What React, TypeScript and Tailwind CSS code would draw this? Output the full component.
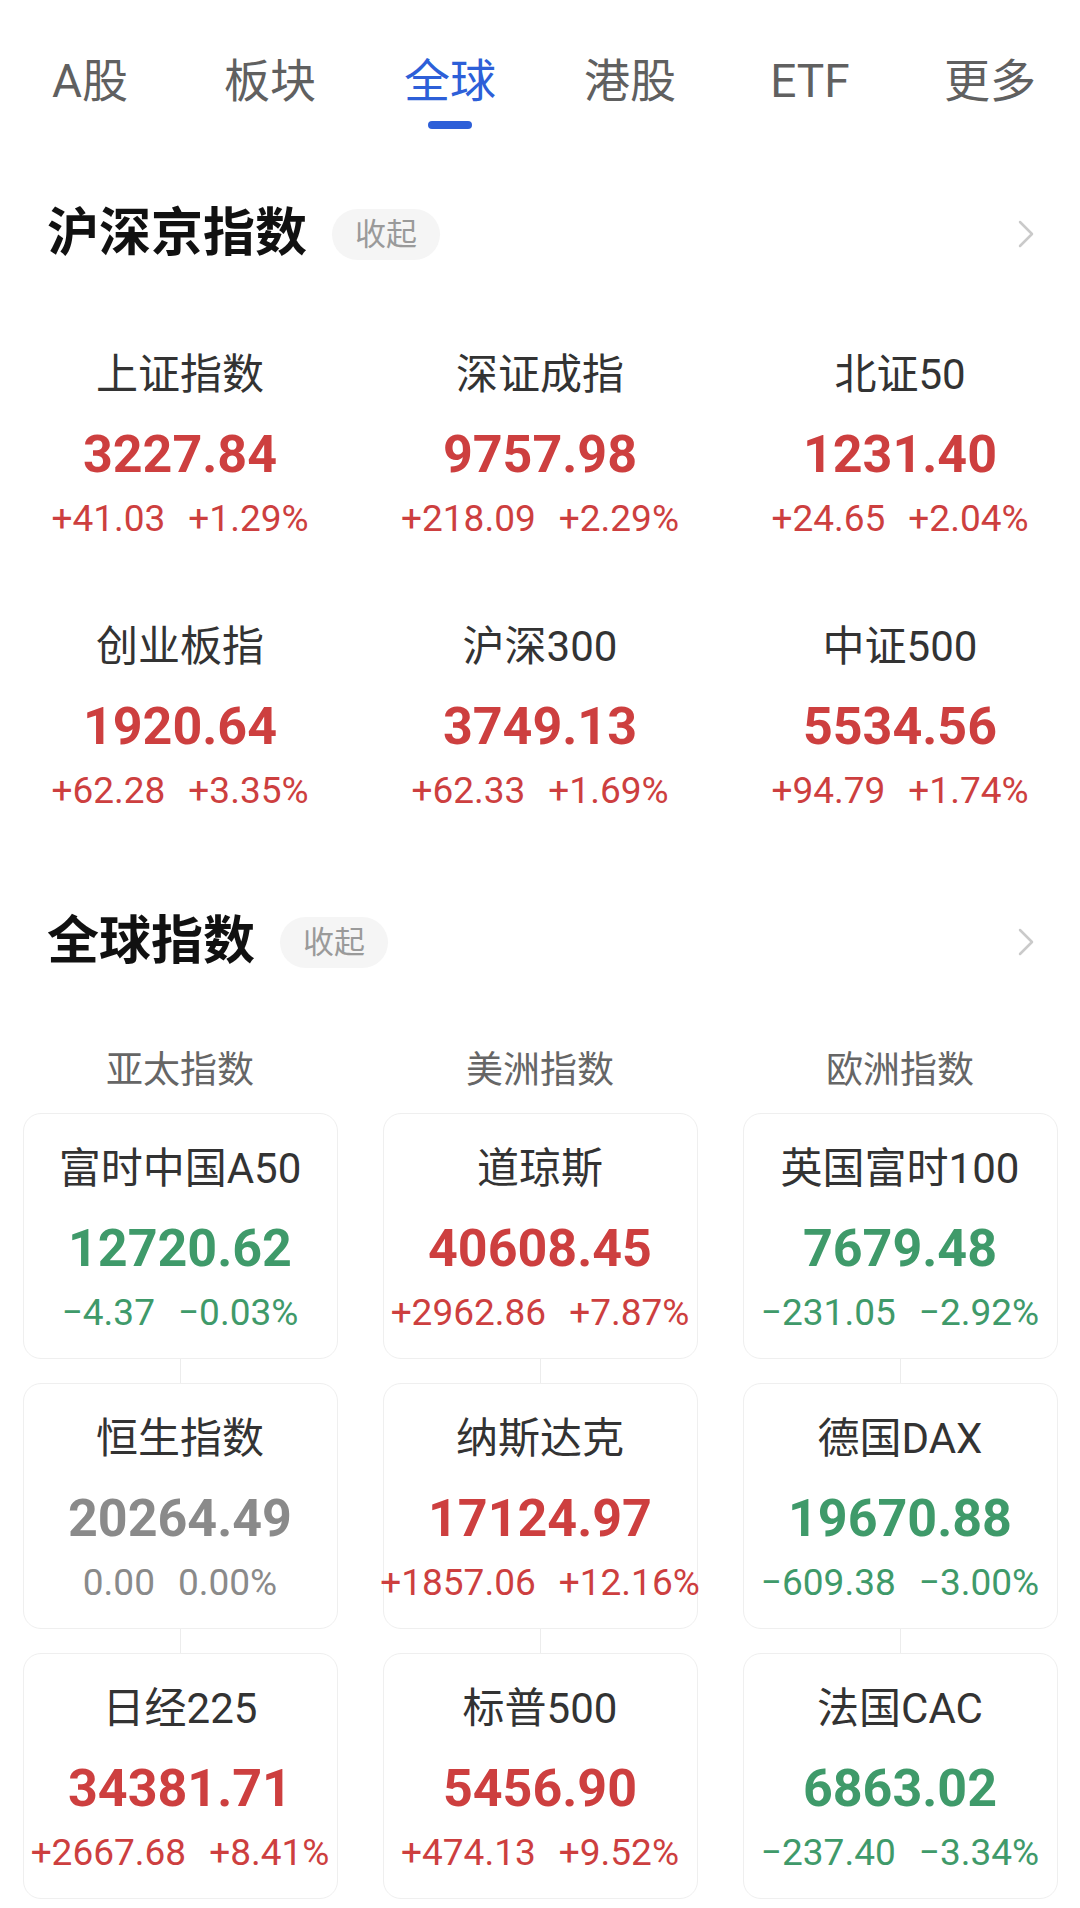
import React from 'react';

type Dir = 'up' | 'down' | 'flat';

interface IndexItem {
  name: string;
  value: string;
  chg: string;
  pct: string;
  dir: Dir;
}

const tabs = ['A股', '板块', '全球', '港股', 'ETF', '更多'];

const domestic: IndexItem[] = [
  { name: '上证指数', value: '3227.84', chg: '+41.03', pct: '+1.29%', dir: 'up' },
  { name: '深证成指', value: '9757.98', chg: '+218.09', pct: '+2.29%', dir: 'up' },
  { name: '北证50', value: '1231.40', chg: '+24.65', pct: '+2.04%', dir: 'up' },
  { name: '创业板指', value: '1920.64', chg: '+62.28', pct: '+3.35%', dir: 'up' },
  { name: '沪深300', value: '3749.13', chg: '+62.33', pct: '+1.69%', dir: 'up' },
  { name: '中证500', value: '5534.56', chg: '+94.79', pct: '+1.74%', dir: 'up' },
];

const regions: { title: string; items: IndexItem[] }[] = [
  {
    title: '亚太指数',
    items: [
      { name: '富时中国A50', value: '12720.62', chg: '−4.37', pct: '−0.03%', dir: 'down' },
      { name: '恒生指数', value: '20264.49', chg: '0.00', pct: '0.00%', dir: 'flat' },
      { name: '日经225', value: '34381.71', chg: '+2667.68', pct: '+8.41%', dir: 'up' },
    ],
  },
  {
    title: '美洲指数',
    items: [
      { name: '道琼斯', value: '40608.45', chg: '+2962.86', pct: '+7.87%', dir: 'up' },
      { name: '纳斯达克', value: '17124.97', chg: '+1857.06', pct: '+12.16%', dir: 'up' },
      { name: '标普500', value: '5456.90', chg: '+474.13', pct: '+9.52%', dir: 'up' },
    ],
  },
  {
    title: '欧洲指数',
    items: [
      { name: '英国富时100', value: '7679.48', chg: '−231.05', pct: '−2.92%', dir: 'down' },
      { name: '德国DAX', value: '19670.88', chg: '−609.38', pct: '−3.00%', dir: 'down' },
      { name: '法国CAC', value: '6863.02', chg: '−237.40', pct: '−3.34%', dir: 'down' },
    ],
  },
];

const colorFor = (dir: Dir) => {
  if (dir === 'up') return 'text-[#cd3f3f]';
  if (dir === 'down') return 'text-[#3f9a6a]';
  return 'text-[#8a8a8a]';
};

const Chevron = () => (
  <svg width="18" height="28" viewBox="0 0 18 28" fill="none">
    <path d="M3 2 L15 14 L3 26" stroke="#cacaca" strokeWidth="2.5" strokeLinecap="round" strokeLinejoin="round" />
  </svg>
);

const SectionHeader: React.FC<{ title: string }> = ({ title }) => (
  <div className="flex items-center justify-between h-[52px] pl-[47px] pr-[45px]">
    <div className="flex items-center">
      <h2 className="text-[52px] leading-[52px] font-bold text-[#111]">{title}</h2>
      <span className="ml-[25px] h-[51px] px-[23px] rounded-full bg-[#f5f5f5] text-[31px] leading-[51px] text-[#9a9a9a]">
        收起
      </span>
    </div>
    <Chevron />
  </div>
);

const IndexCell: React.FC<{ item: IndexItem }> = ({ item }) => (
  <div className="flex flex-col items-center">
    <p className="text-[42px] leading-[48px] text-[#333] whitespace-nowrap">{item.name}</p>
    <p className={`mt-6 text-[52px] leading-[64px] font-bold ${colorFor(item.dir)}`}>{item.value}</p>
    <p className={`mt-[10px] flex gap-[23px] text-[37px] leading-[44px] whitespace-nowrap ${colorFor(item.dir)}`}>
      <span>{item.chg}</span>
      <span>{item.pct}</span>
    </p>
  </div>
);

const App: React.FC = () => {
  return (
    <div className="w-[1080px] min-h-[1908px] bg-white font-[Roboto,'Noto_Sans_CJK_SC',sans-serif] overflow-hidden">
      {/* Tabs */}
      <div className="grid grid-cols-6 pt-[55px]">
        {tabs.map((t) => (
          <div key={t} className="flex flex-col items-center">
            <span
              className={`text-[46px] leading-[52px] ${t === '全球' ? 'text-[#2d5fd8]' : 'text-[#606060]'}`}
            >
              {t}
            </span>
            <span className={`mt-[14px] h-[8px] w-[44px] rounded-full ${t === '全球' ? 'bg-[#2d5fd8]' : 'bg-transparent'}`} />
          </div>
        ))}
      </div>

      {/* 沪深京指数 */}
      <div className="mt-[79px]">
        <SectionHeader title="沪深京指数" />
        <div className="grid grid-cols-3 gap-y-[82px] pt-[91px]">
          {domestic.map((item) => (
            <IndexCell key={item.name} item={item} />
          ))}
        </div>
      </div>

      {/* 全球指数 */}
      <div className="mt-[103px]">
        <SectionHeader title="全球指数" />
        <div className="grid grid-cols-3 pt-[81px]">
          {regions.map((region) => (
            <div key={region.title} className="flex flex-col">
              <p className="text-center text-[37px] leading-[44px] text-[#666]">{region.title}</p>
              <div className="mt-[20px] flex flex-col items-center">
                {region.items.map((item, i) => (
                  <React.Fragment key={item.name}>
                    {i > 0 && <div className="w-px h-[24px] bg-[#ececec]" />}
                    <div className="w-[315px] h-[246px] rounded-[18px] border border-[#efefef] bg-white pt-[31px]">
                      <IndexCell item={item} />
                    </div>
                  </React.Fragment>
                ))}
              </div>
            </div>
          ))}
        </div>
      </div>
    </div>
  );
};

export default App;
